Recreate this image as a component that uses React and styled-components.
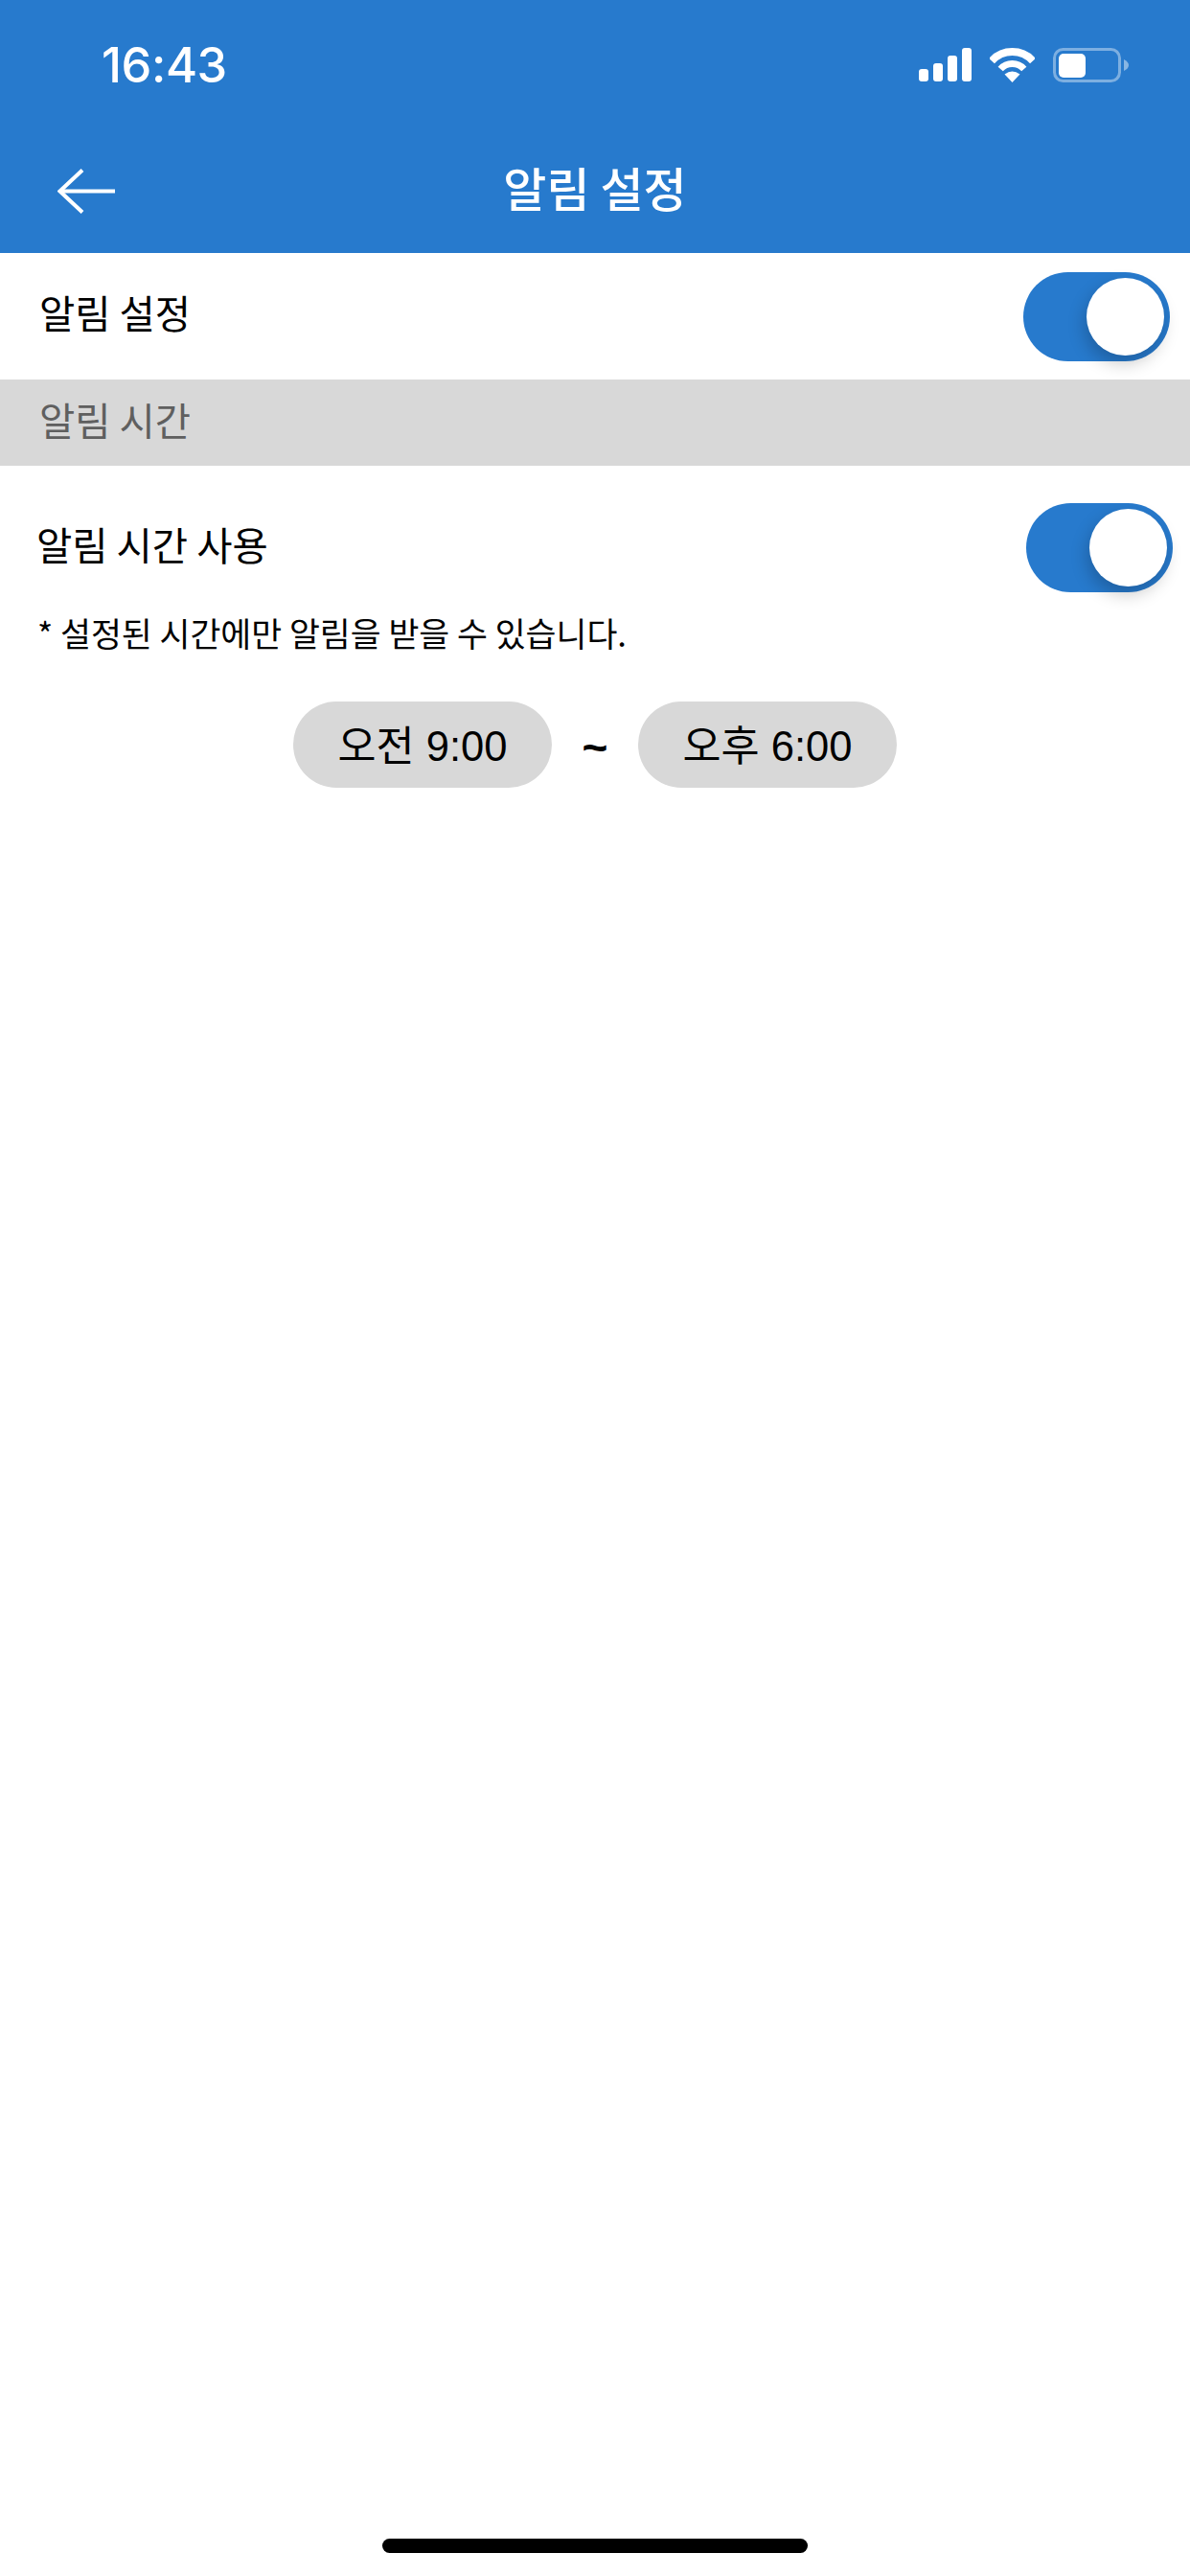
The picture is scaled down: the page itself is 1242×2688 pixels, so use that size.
import React from "react";
import styled, { createGlobalStyle } from "styled-components";

const Global = createGlobalStyle`
  html, body { margin: 0; padding: 0; background: #fff; }
  #root { width: 1242px; }
`;
const KR = `"Liberation Sans", "Noto Sans CJK KR", sans-serif`;

const Screen = styled.div`
  width: 1242px; height: 2688px; display: flex; flex-direction: column;
  background: #fff; color: #000; font-family: ${KR}; overflow: hidden;
`;
const Header = styled.header`
  height: 264px; background: #277acd; color: #fff; flex: none;
`;
const StatusBar = styled.div`
  height: 135px; display: flex; align-items: center; justify-content: space-between;
  padding: 0 64px 0 106px; box-sizing: border-box;
`;
const Clock = styled.span`
  font-family: Inter, sans-serif; font-size: 50.5px; font-weight: 500; letter-spacing: -0.4px;
`;
const StatusIcons = styled.div`display: flex; align-items: center; gap: 19px;`;
const Signal = styled.div`display: flex; align-items: flex-end; gap: 5px; height: 35px;`;
const SignalBar = styled.i`
  display: block; width: 10px; height: ${p => p.$h}px; background: #fff; border-radius: 3px;
`;
const Nav = styled.div`
  height: 129px; padding-bottom: 1px; box-sizing: border-box; display: grid;
  grid-template-columns: 1fr auto 1fr; align-items: center;
`;
const BackButton = styled.div`padding-left: 60px; display: flex; align-items: center;`;
const Title = styled.h1`
  margin: 0; font-size: 49px; font-weight: 500; font-family: "Noto Sans CJK KR", sans-serif;
  line-height: 60px; padding-bottom: 8px;
`;
const Row = styled.div`
  display: flex; align-items: center; justify-content: space-between; flex: none;
  height: ${p => p.$h}px; padding: ${p => p.$pad}; box-sizing: border-box;
`;
const RowLabel = styled.span`
  font-family: "Noto Sans CJK KR", sans-serif; font-size: 40.5px; line-height: 50px; font-weight: 400;
  padding-bottom: 8px;
`;
const SectionBar = styled.div`
  height: 90px; flex: none; background: #d8d8d8; display: flex; align-items: center;
  padding: 0 0 8px 41px; box-sizing: border-box; color: #5f5f5f;
  font-family: "Noto Sans CJK KR", sans-serif; font-size: 40.5px; font-weight: 400;
`;
const Track = styled.div`
  width: 153px; height: 93px; border-radius: 47px; background: #277acd; flex: none;
  display: flex; align-items: center; justify-content: flex-end; padding-right: 6px;
  box-sizing: border-box;
`;
const Knob = styled.div`
  width: 81px; height: 81px; border-radius: 50%; background: #fff;
  box-shadow: -2px 8px 18px rgba(0, 0, 0, 0.22);
`;
const Note = styled.p`
  margin: 0; padding-left: 39px; font-family: "Noto Sans CJK KR", sans-serif;
  font-size: 34.7px; line-height: 44px; flex: none;
`;
const TimeRow = styled.div`
  display: flex; justify-content: center; align-items: center; margin-top: 50px; flex: none;
`;
const TimePill = styled.div`
  width: 270px; height: 90px; border-radius: 45px; background: #d8d8d8;
  display: flex; align-items: center; justify-content: center; font-size: 43.5px;
  padding-bottom: 4px; box-sizing: border-box;
`;
const Tilde = styled.span`
  width: 90px; text-align: center; font-size: 46px; font-weight: 700; padding-top: 6px;
`;
const HomeIndicator = styled.div`
  width: 444px; height: 15px; border-radius: 8px; background: #000;
  margin: auto auto 24px;
`;

const Switch = () => <Track><Knob /></Track>;

export default function App() {
  return (
    <Screen>
      <Global />
      <Header>
        <StatusBar>
          <Clock>16:43</Clock>
          <StatusIcons>
            <Signal>
              <SignalBar $h={13} /><SignalBar $h={19} /><SignalBar $h={27} /><SignalBar $h={35} />
            </Signal>
            <svg width="47" height="36" viewBox="0 0 47 36" fill="none">
              <path d="M2 13.6A29 29 0 0 1 45 13.6" stroke="#fff" strokeWidth="8" />
              <path d="M11.2 22A16.5 16.5 0 0 1 35.8 22" stroke="#fff" strokeWidth="7" />
              <path d="M23.5 36L15.5 27.5Q23.5 21.5 31.5 27.5Z" fill="#fff" />
            </svg>
            <svg width="79" height="36" viewBox="0 0 79 36" fill="none">
              <rect x="1.5" y="1.5" width="68" height="33" rx="9" stroke="#fff" strokeOpacity="0.4" strokeWidth="3" />
              <rect x="6" y="6" width="28" height="25" rx="5" fill="#fff" />
              <path d="M74 12C77 13.5 79 15.5 79 18S77 22.5 74 24Z" fill="#fff" fillOpacity="0.45" />
            </svg>
          </StatusIcons>
        </StatusBar>
        <Nav>
          <BackButton>
            <svg width="60" height="47" viewBox="0 0 60 47" fill="none" stroke="#fff" strokeWidth="4">
              <path d="M60 23.5H2" />
              <path d="M26 1.5L2.5 23.5L26 45.5" />
            </svg>
          </BackButton>
          <Title>알림 설정</Title>
          <div />
        </Nav>
      </Header>
      <Row $h={132} $pad="0 21px 0 41px">
        <RowLabel>알림 설정</RowLabel>
        <Switch />
      </Row>
      <SectionBar>알림 시간</SectionBar>
      <Row $h={152} $pad="39px 18px 20px 38px">
        <RowLabel>알림 시간 사용</RowLabel>
        <Switch />
      </Row>
      <Note>* 설정된 시간에만 알림을 받을 수 있습니다.</Note>
      <TimeRow>
        <TimePill>오전 9:00</TimePill>
        <Tilde>~</Tilde>
        <TimePill>오후 6:00</TimePill>
      </TimeRow>
      <HomeIndicator />
    </Screen>
  );
}
